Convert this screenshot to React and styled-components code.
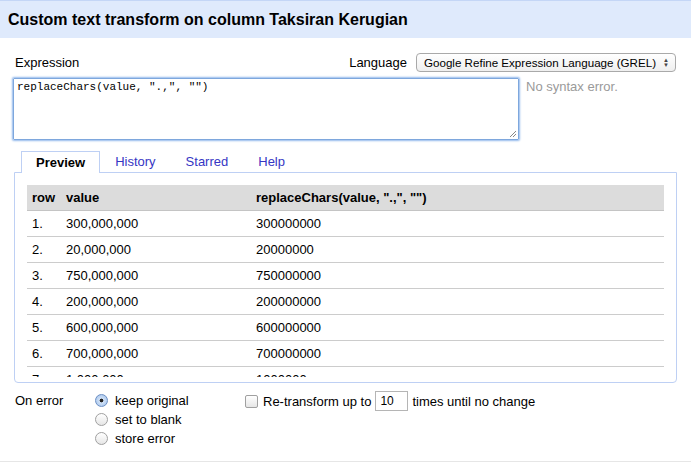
import React from "react";
import styled, { createGlobalStyle } from "styled-components";

const GlobalStyle = createGlobalStyle`
  html, body {
    margin: 0;
    padding: 0;
    background: #ffffff;
    font-family: "Liberation Sans", Arial, sans-serif;
    font-size: 13px;
    line-height: 15px;
    color: #000;
  }
`;

const Dialog = styled.div`
  width: 691px;
  height: 464px;
  overflow: hidden;
  display: flex;
  flex-direction: column;
`;

const Header = styled.div`
  height: 37px;
  border-top: 1px solid #c4d6f6;
  background: #dfeafc;
  display: flex;
  align-items: center;
  padding-left: 8px;
  font-size: 16px;
  font-weight: bold;
`;

const Body = styled.div`
  flex: 1;
  padding: 15px 14px 0 14px;
`;

const TopRow = styled.div`
  display: flex;
  justify-content: space-between;
  align-items: center;
  width: 662px;
  height: 19px;
`;

const Label = styled.span`
  font-size: 13px;
  padding-left: ${(p) => p.$indent || 0}px;
`;

const LangGroup = styled.div`
  display: flex;
  align-items: center;
  gap: 9px;
`;

const Select = styled.div`
  width: 245px;
  height: 17px;
  border: 1px solid #a9a9a9;
  border-radius: 4px;
  background: linear-gradient(#ffffff, #efefef);
  display: flex;
  align-items: center;
  justify-content: space-between;
  padding: 0 6px 0 7px;
  box-sizing: content-box;
  font-size: 11.6px;
`;

const Arrows = styled.span`
  font-size: 6px;
  line-height: 5px;
  display: flex;
  flex-direction: column;
  color: #444;
`;

const EditRow = styled.div`
  display: flex;
  align-items: flex-start;
  gap: 7px;
  margin-top: 6px;
  margin-left: -1px;
`;

const TextArea = styled.div`
  width: 498px;
  height: 56px;
  border: 1px solid #7ea7dd;
  box-shadow: 0 0 2px 1px #93b9ec;
  border-radius: 1px;
  padding: 2px 3px;
  font-family: "Liberation Mono", "Courier New", monospace;
  font-size: 11px;
  line-height: 13px;
  position: relative;
`;

const Grip = styled.svg`
  position: absolute;
  right: 1px;
  bottom: 1px;
`;

const Status = styled.div`
  color: #9a9a9a;
  font-size: 13px;
  margin-top: 1px;
`;

const Tabs = styled.div`
  display: flex;
  margin-top: 11px;
  padding-left: 7px;
  height: 21px;
`;

const Tab = styled.div`
  padding: 0 14px 1px 14px;
  display: flex;
  align-items: center;
  font-size: 13px;
  box-sizing: border-box;
  height: ${(p) => (p.$active ? "22px" : "21px")};
  color: ${(p) => (p.$active ? "#000" : "#3636c4")};
  font-weight: ${(p) => (p.$active ? "bold" : "normal")};
  background: #fff;
  border: 1px solid ${(p) => (p.$active ? "#bed0f4" : "transparent")};
  border-bottom: none;
  position: relative;
  z-index: 1;
`;

const Panel = styled.div`
  width: 637px;
  border: 1px solid #bed0f4;
  border-radius: 0 0 4px 4px;
  padding: 12px 12px 5px 12px;
`;

const Scroller = styled.div`
  height: 192px;
  overflow: hidden;
`;

const Table = styled.table`
  width: 100%;
  border-collapse: collapse;
  font-size: 13px;
`;

const Th = styled.th`
  background: #dcdcdc;
  height: 25px;
  text-align: left;
  padding: 0 5px;
  font-weight: bold;
  border-bottom: 1px solid #c4c4c4;
  width: ${(p) => p.$w || "auto"};
`;

const Td = styled.td`
  height: 25px;
  padding: 0 5px;
  border-bottom: 1px solid #cccccc;
`;

const Options = styled.div`
  display: grid;
  grid-template-columns: 80px 150px 1fr;
  margin-top: 8px;
  padding-left: 1px;
`;

const OptLabel = styled.div`
  padding-top: 2px;
`;

const RadioList = styled.div`
  display: flex;
  flex-direction: column;
  gap: 4px;
  padding-top: 2px;
`;

const RadioRow = styled.label`
  display: flex;
  align-items: center;
  gap: 7px;
  height: 15px;
`;

const Radio = styled.span`
  width: 11px;
  height: 11px;
  border-radius: 50%;
  border: 1px solid #9a9a9a;
  background: ${(p) =>
    p.$on
      ? "radial-gradient(circle, #222 0 1.6px, #cfe0f6 2.2px, #9fc0ea 100%)"
      : "linear-gradient(#ffffff, #e6e6e6)"};
  border-color: ${(p) => (p.$on ? "#6c8fc4" : "#a0a0a0")};
`;

const RepeatRow = styled.div`
  display: flex;
  align-items: center;
  height: 20px;
`;

const Check = styled.span`
  width: 11px;
  height: 11px;
  border: 1px solid #a0a0a0;
  border-radius: 2px;
  background: linear-gradient(#ffffff, #e6e6e6);
  margin-right: 5px;
`;

const SmallInput = styled.div`
  width: 27px;
  height: 18px;
  border: 1px solid #b5b5b5;
  margin: 0 4px 0 4px;
  padding-left: 4px;
  display: flex;
  align-items: center;
  font-size: 12px;
`;

const Footer = styled.div`
  height: 2px;
  border-top: 1px solid #e6e6e6;
`;

const rows = [
  ["300,000,000", "300000000"],
  ["20,000,000", "20000000"],
  ["750,000,000", "750000000"],
  ["200,000,000", "200000000"],
  ["600,000,000", "600000000"],
  ["700,000,000", "700000000"],
  ["1,000,000", "1000000"],
];

export default function App() {
  return (
    <>
      <GlobalStyle />
      <Dialog>
        <Header>Custom text transform on column Taksiran Kerugian</Header>
        <Body>
          <TopRow>
            <Label $indent={1}>Expression</Label>
            <LangGroup>
              <Label>Language</Label>
              <Select>
                <span>Google Refine Expression Language (GREL)</span>
                <Arrows>
                  <span>▲</span>
                  <span>▼</span>
                </Arrows>
              </Select>
            </LangGroup>
          </TopRow>
          <EditRow>
            <TextArea>
              replaceChars(value, ".,", "")
              <Grip width="8" height="8" viewBox="0 0 8 8">
                <path d="M7 1 L1 7 M7 4 L4 7" stroke="#888" strokeWidth="1" />
              </Grip>
            </TextArea>
            <Status>No syntax error.</Status>
          </EditRow>
          <Tabs>
            <Tab $active>Preview</Tab>
            <Tab>History</Tab>
            <Tab>Starred</Tab>
            <Tab>Help</Tab>
          </Tabs>
          <Panel>
            <Scroller>
              <Table>
                <thead>
                  <tr>
                    <Th $w="24px">row</Th>
                    <Th $w="180px">value</Th>
                    <Th>replaceChars(value, ".,", "")</Th>
                  </tr>
                </thead>
                <tbody>
                  {rows.map(([v, r], i) => (
                    <tr key={i}>
                      <Td>{i + 1}.</Td>
                      <Td>{v}</Td>
                      <Td>{r}</Td>
                    </tr>
                  ))}
                </tbody>
              </Table>
            </Scroller>
          </Panel>
          <Options>
            <OptLabel>On error</OptLabel>
            <RadioList>
              <RadioRow>
                <Radio $on />
                keep original
              </RadioRow>
              <RadioRow>
                <Radio />
                set to blank
              </RadioRow>
              <RadioRow>
                <Radio />
                store error
              </RadioRow>
            </RadioList>
            <RepeatRow>
              <Check />
              Re-transform up to
              <SmallInput>10</SmallInput>
              times until no change
            </RepeatRow>
          </Options>
        </Body>
        <Footer />
      </Dialog>
    </>
  );
}
